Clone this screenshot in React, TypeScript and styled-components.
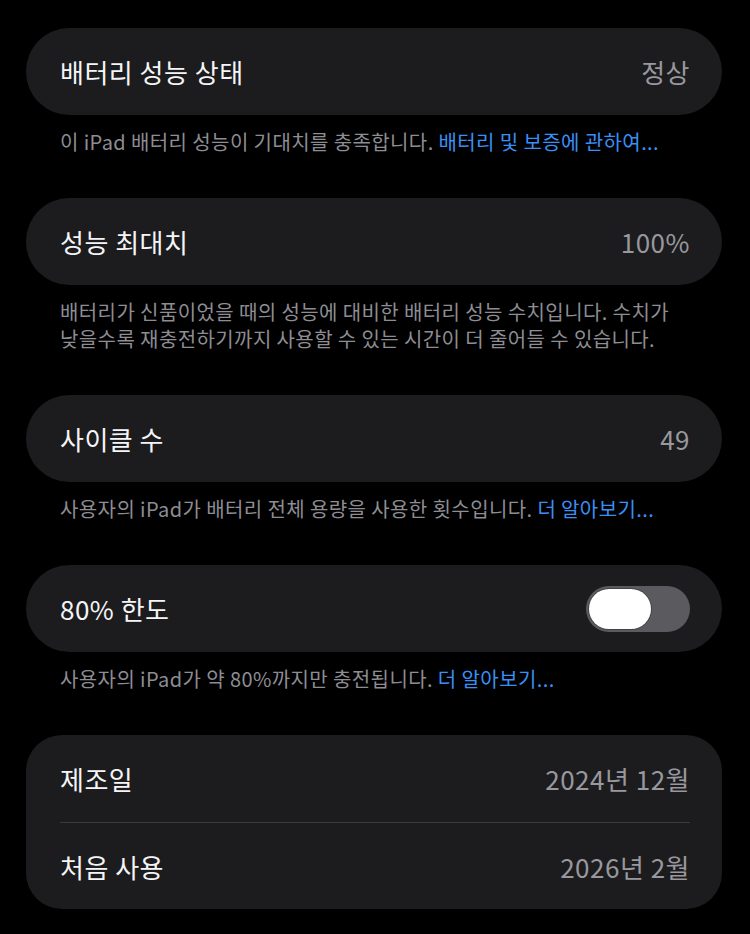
import React, { useState } from "react";
import styled, { createGlobalStyle } from "styled-components";

const GlobalStyle = createGlobalStyle`
  html, body {
    margin: 0;
    padding: 0;
    background: #000;
  }
  body {
    font-family: "Noto Sans CJK KR", "Noto Sans", sans-serif;
    color: #fff;
  }
`;

type Row = { label: string; value?: string; toggle?: boolean };

type Section = {
  rows: Row[];
  footer?: string;
  link?: string;
};

const sections: Section[] = [
  {
    rows: [{ label: "배터리 성능 상태", value: "정상" }],
    footer: "이 iPad 배터리 성능이 기대치를 충족합니다.",
    link: "배터리 및 보증에 관하여...",
  },
  {
    rows: [{ label: "성능 최대치", value: "100%" }],
    footer:
      "배터리가 신품이었을 때의 성능에 대비한 배터리 성능 수치입니다. 수치가 낮을수록 재충전하기까지 사용할 수 있는 시간이 더 줄어들 수 있습니다.",
  },
  {
    rows: [{ label: "사이클 수", value: "49" }],
    footer: "사용자의 iPad가 배터리 전체 용량을 사용한 횟수입니다.",
    link: "더 알아보기...",
  },
  {
    rows: [{ label: "80% 한도", toggle: true }],
    footer: "사용자의 iPad가 약 80%까지만 충전됩니다.",
    link: "더 알아보기...",
  },
  {
    rows: [
      { label: "제조일", value: "2024년 12월" },
      { label: "처음 사용", value: "2026년 2월" },
    ],
  },
];

export default function App() {
  const [limitOn, setLimitOn] = useState<boolean>(true);

  return (
    <>
      <GlobalStyle />
      <Page>
        {sections.map((section, index) => (
          <Group key={index}>
            <Card $multi={section.rows.length > 1}>
              {section.rows.map((row) => (
                <CardRow key={row.label}>
                  <Label>{row.label}</Label>
                  {row.toggle ? (
                    <Switch
                      $on={limitOn}
                      onClick={() => setLimitOn(!limitOn)}
                      aria-label={row.label}
                    >
                      <Knob />
                    </Switch>
                  ) : (
                    <Value>{row.value}</Value>
                  )}
                </CardRow>
              ))}
            </Card>
            {section.footer && (
              <Footer>
                {section.footer}
                {section.link && (
                  <>
                    {" "}
                    <Link>{section.link}</Link>
                  </>
                )}
              </Footer>
            )}
          </Group>
        ))}
      </Page>
    </>
  );
}

const Page = styled.div`
  padding: 28px 28px 0 26px;
  display: flex;
  flex-direction: column;
  gap: 43px;
`;

const Group = styled.section`
  display: flex;
  flex-direction: column;
`;

const Card = styled.div<{ $multi: boolean }>`
  background: #1c1c1e;
  border-radius: ${(p) => (p.$multi ? "36px" : "44px")};
  padding: 0 32px 0 34px;
  display: flex;
  flex-direction: column;
`;

const CardRow = styled.div`
  height: 87px;
  display: flex;
  align-items: center;
  justify-content: space-between;

  & + & {
    border-top: 1px solid #3a3a3c;
    height: 86px;
  }
`;

const Label = styled.span`
  font-size: 26px;
  letter-spacing: 0.5px;
  color: #f5f5f7;
`;

const Value = styled.span`
  font-size: 26px;
  letter-spacing: 0.5px;
  color: #98989e;
`;

const Switch = styled.button<{ $on: boolean }>`
  width: 104px;
  height: 46px;
  border: none;
  border-radius: 23px;
  padding: 3px;
  background: #5a5a5f;
  display: flex;
  justify-content: ${(p) => (p.$on ? "flex-start" : "flex-end")};
  align-items: center;
  cursor: pointer;
`;

const Knob = styled.span`
  width: 62px;
  height: 40px;
  border-radius: 20px;
  background: #fff;
  box-shadow: 0 0 0 1px rgba(0, 0, 0, 0.25);
`;

const Footer = styled.p`
  margin: 0;
  padding: 13px 30px 0 34px;
  font-size: 20px;
  line-height: 27px;
  letter-spacing: 0.4px;
  color: #8d8d93;
`;

const Link = styled.span`
  color: #3a8ff5;
`;
